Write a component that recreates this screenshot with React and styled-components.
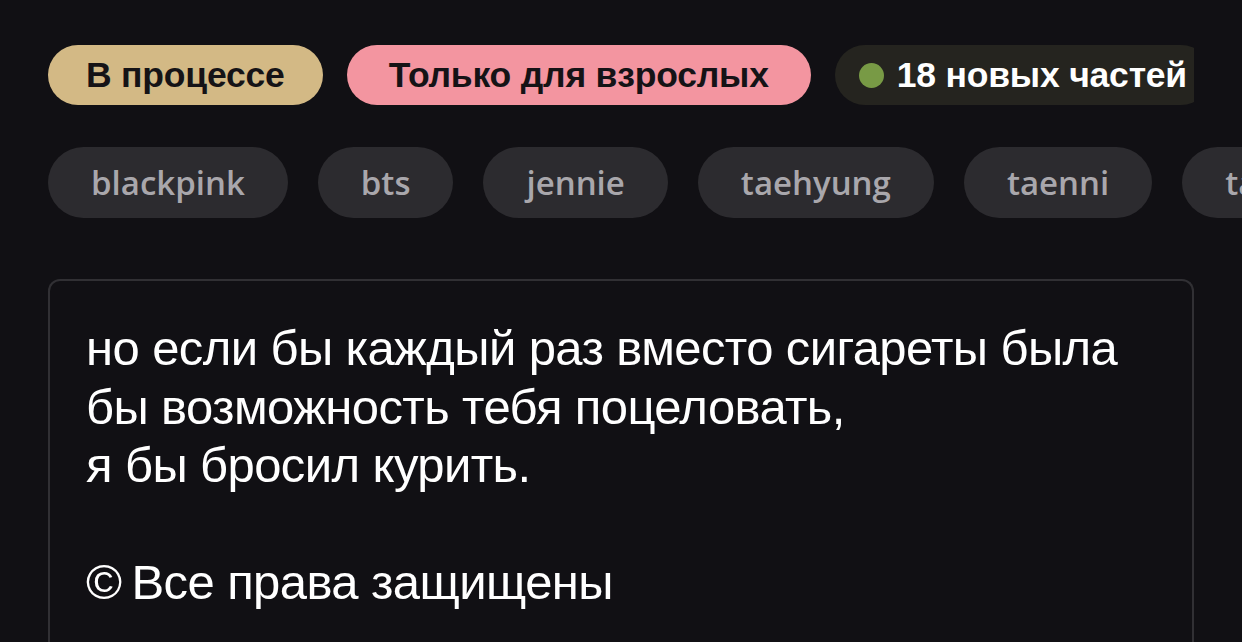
import React from "react";
import styled, { createGlobalStyle } from "styled-components";

const Global = createGlobalStyle`
  html, body { margin: 0; padding: 0; background: #111014; }
  body { width: 1242px; height: 642px; overflow: hidden; }
`;

const Page = styled.div`
  padding: 45px 48px 0 48px;
  display: flex;
  flex-direction: column;
  font-family: "Liberation Sans", Arial, sans-serif;
`;

const BadgeRow = styled.div`
  display: flex;
  gap: 24px;
  overflow: hidden;
  white-space: nowrap;
`;

const Badge = styled.div`
  flex: none;
  display: flex;
  align-items: center;
  gap: 13px;
  height: 60px;
  padding: 0 ${(p) => p.$pad}px;
  border-radius: 30px;
  background: ${(p) => p.$bg};
  color: ${(p) => p.$fg};
  font-weight: 700;
  font-size: 35.5px;
  letter-spacing: -0.2px;
`;

const Dot = styled.span`
  width: 25px;
  height: 25px;
  border-radius: 50%;
  background: #789a45;
  flex: none;
`;

const TagRow = styled.div`
  display: flex;
  gap: 30px;
  margin-top: 42px;
  margin-right: -48px;
  overflow: hidden;
  white-space: nowrap;
`;

const Tag = styled.div`
  flex: none;
  height: 71px;
  padding: 0 43px;
  border-radius: 36px;
  background: #2c2b2f;
  color: #a9a7ac;
  display: flex;
  align-items: center;
  font-family: "Open Sans", sans-serif;
  font-weight: 600;
  font-size: 33px;
`;

const Card = styled.div`
  margin-top: 61px;
  border: 2px solid #313034;
  border-bottom: none;
  border-radius: 12px 12px 0 0;
  padding: 38px 36px 80px 36px;
  color: #ffffff;
  font-size: 49px;
  line-height: 58.5px;
  letter-spacing: -0.6px;
`;

const Line = styled.div`
  min-height: 58.5px;
`;

const Copy = styled.span`
  margin-right: -3px;
`;

const tags = ["blackpink", "bts", "jennie", "taehyung", "taenni", "taekook"];

export default function App() {
  return (
    <>
      <Global />
      <Page>
        <BadgeRow>
          <Badge $bg="#d3b985" $fg="#151316" $pad={38}>В процессе</Badge>
          <Badge $bg="#f395a0" $fg="#151316" $pad={42}>Только для взрослых</Badge>
          <Badge $bg="#25241f" $fg="#ffffff" $pad={24}>
            <Dot />
            18 новых частей
          </Badge>
        </BadgeRow>
        <TagRow>
          {tags.map((t) => (
            <Tag key={t}>{t}</Tag>
          ))}
        </TagRow>
        <Card>
          <Line>но если бы каждый раз вместо сигареты была</Line>
          <Line>бы возможность тебя поцеловать,</Line>
          <Line>я бы бросил курить.</Line>
          <Line />
          <Line>
            <Copy>©</Copy> Все права защищены
          </Line>
        </Card>
      </Page>
    </>
  );
}
